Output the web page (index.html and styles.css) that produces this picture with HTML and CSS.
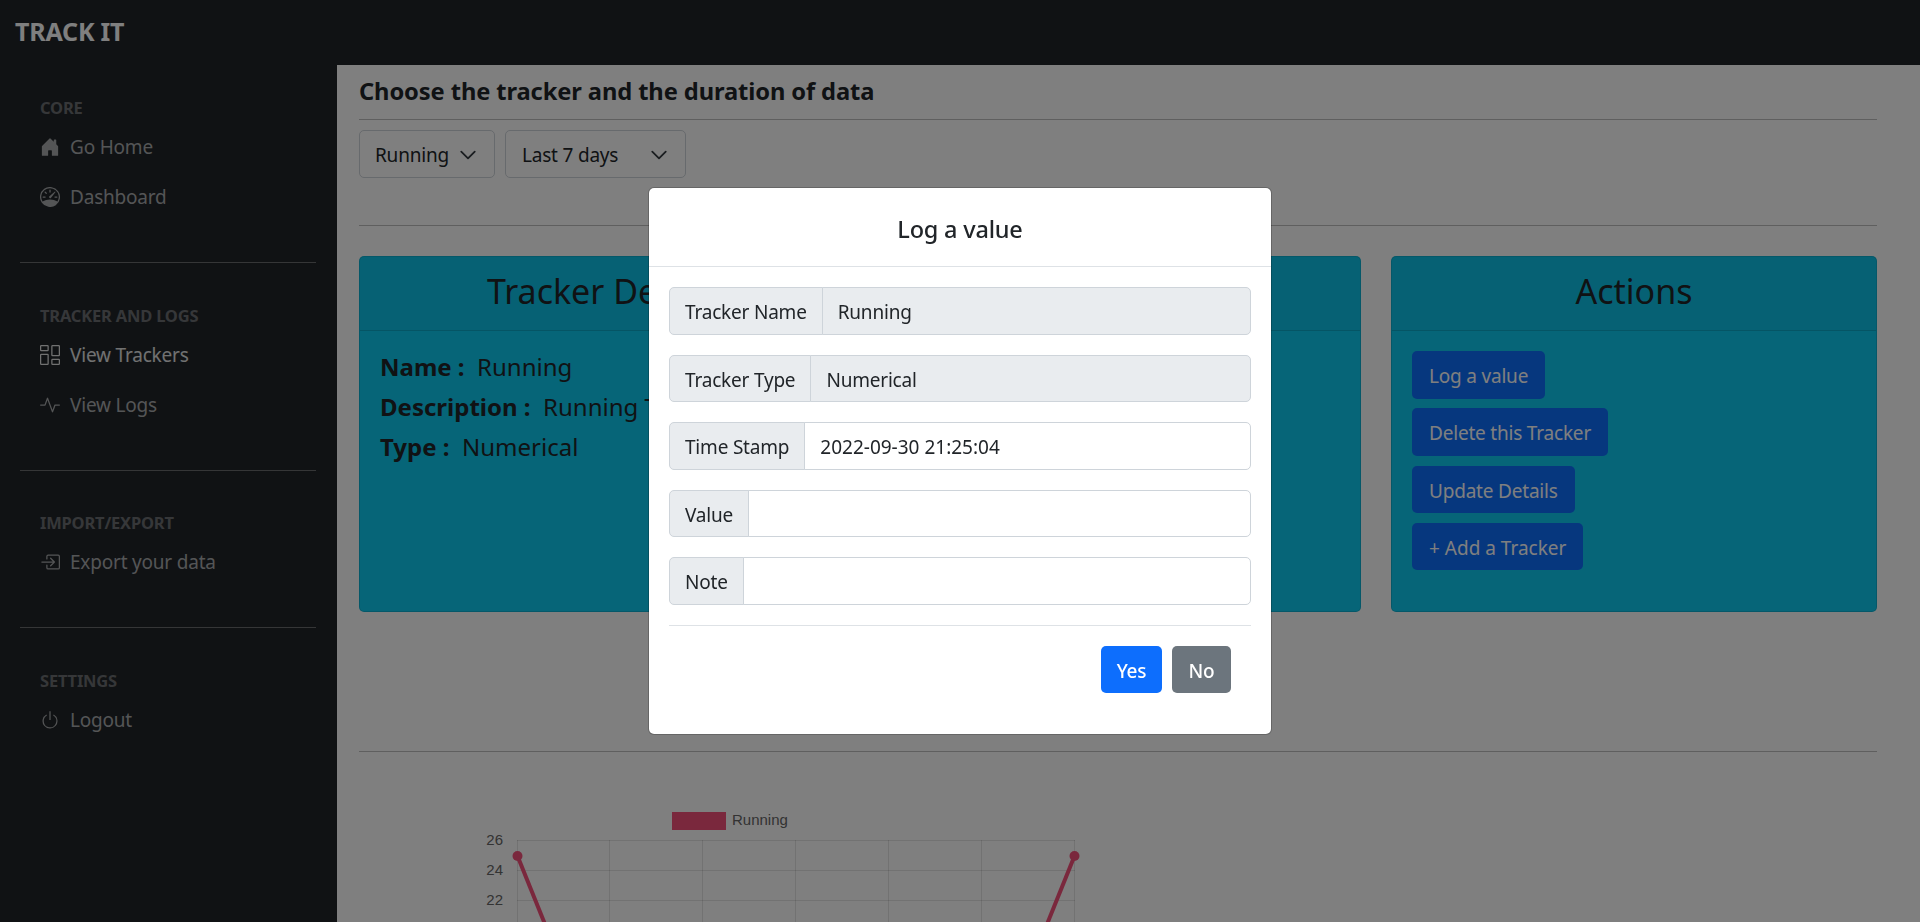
FILE: index.html
```html
<!DOCTYPE html>
<html lang="en">
<head>
    <meta charset="UTF-8">
    <meta name="viewport" content="width=device-width, initial-scale=1.0">
    <title>Track It</title>
    <link rel="stylesheet" href="styles.css">
</head>
<body>
    <header class="topbar">TRACK IT</header>

    <div class="layout">
        <nav class="sidebar">
            <div class="side-heading">CORE</div>
            <a class="side-link">
                <svg class="side-icon" viewBox="0 0 16 16"><path d="M6.5 14.5v-3.505c0-.245.25-.495.5-.495h2c.25 0 .5.25.5.5v3.5a.5.5 0 0 0 .5.5h4a.5.5 0 0 0 .5-.5v-7a.5.5 0 0 0-.146-.354L13 5.793V2.5a.5.5 0 0 0-.5-.5h-1a.5.5 0 0 0-.5.5v1.293L8.354 1.146a.5.5 0 0 0-.708 0l-6 6A.5.5 0 0 0 1.5 7.5v7a.5.5 0 0 0 .5.5h4a.5.5 0 0 0 .5-.5z"/></svg>
                Go Home
            </a>
            <a class="side-link">
                <svg class="side-icon" viewBox="0 0 16 16"><path d="M8 2a.5.5 0 0 1 .5.5V4a.5.5 0 0 1-1 0V2.5A.5.5 0 0 1 8 2zM3.732 3.732a.5.5 0 0 1 .707 0l.915.914a.5.5 0 1 1-.708.708l-.914-.915a.5.5 0 0 1 0-.707zM2 8a.5.5 0 0 1 .5-.5h1.586a.5.5 0 0 1 0 1H2.5A.5.5 0 0 1 2 8zm9.5 0a.5.5 0 0 1 .5-.5h1.5a.5.5 0 0 1 0 1H12a.5.5 0 0 1-.5-.5zm.754-4.246a.389.389 0 0 0-.527-.02L7.547 7.31A.91.91 0 1 0 8.85 8.569l3.434-4.297a.389.389 0 0 0-.029-.518z"/><path fill-rule="evenodd" d="M6.664 15.889A8 8 0 1 1 9.336.11a8 8 0 0 1-2.672 15.78zm-4.665-4.283A11.945 11.945 0 0 1 8 10c2.186 0 4.236.585 6.001 1.606a7 7 0 1 0-12.002 0z"/></svg>
                Dashboard
            </a>
            <hr class="side-rule">

            <div class="side-heading">TRACKER AND LOGS</div>
            <a class="side-link active">
                <svg class="side-icon" viewBox="0 0 16 16"><path d="M6 1v3H1V1h5zM1 0a1 1 0 0 0-1 1v3a1 1 0 0 0 1 1h5a1 1 0 0 0 1-1V1a1 1 0 0 0-1-1H1zm14 12v3h-5v-3h5zm-5-1a1 1 0 0 0-1 1v3a1 1 0 0 0 1 1h5a1 1 0 0 0 1-1v-3a1 1 0 0 0-1-1h-5zM6 8v7H1V8h5zM1 7a1 1 0 0 0-1 1v7a1 1 0 0 0 1 1h5a1 1 0 0 0 1-1V8a1 1 0 0 0-1-1H1zm14-6v7h-5V1h5zm-5-1a1 1 0 0 0-1 1v7a1 1 0 0 0 1 1h5a1 1 0 0 0 1-1V1a1 1 0 0 0-1-1h-5z"/></svg>
                View Trackers
            </a>
            <a class="side-link">
                <svg class="side-icon" viewBox="0 0 16 16"><path fill-rule="evenodd" d="M6 2a.5.5 0 0 1 .47.33L10 12.036l1.53-4.208A.5.5 0 0 1 12 7.5h3.5a.5.5 0 0 1 0 1h-3.15l-1.88 5.17a.5.5 0 0 1-.94 0L6 3.964 4.47 8.171A.5.5 0 0 1 4 8.5H.5a.5.5 0 0 1 0-1h3.15l1.88-5.17A.5.5 0 0 1 6 2z"/></svg>
                View Logs
            </a>
            <hr class="side-rule">

            <div class="side-heading">IMPORT/EXPORT</div>
            <a class="side-link">
                <svg class="side-icon" viewBox="0 0 16 16"><path fill-rule="evenodd" d="M6 3.5a.5.5 0 0 1 .5-.5h8a.5.5 0 0 1 .5.5v9a.5.5 0 0 1-.5.5h-8a.5.5 0 0 1-.5-.5v-2a.5.5 0 0 0-1 0v2A1.5 1.5 0 0 0 6.5 14h8a1.5 1.5 0 0 0 1.5-1.5v-9A1.5 1.5 0 0 0 14.5 2h-8A1.5 1.5 0 0 0 5 3.5v2a.5.5 0 0 0 1 0v-2z"/><path fill-rule="evenodd" d="M11.854 8.354a.5.5 0 0 0 0-.708l-3-3a.5.5 0 1 0-.708.708L10.293 7.5H1.5a.5.5 0 0 0 0 1h8.793l-2.147 2.146a.5.5 0 0 0 .708.708l3-3z"/></svg>
                Export your data
            </a>
            <hr class="side-rule">

            <div class="side-heading">SETTINGS</div>
            <a class="side-link">
                <svg class="side-icon" viewBox="0 0 16 16"><path d="M7.5 1v7h1V1h-1z"/><path d="M3 8.812a4.999 4.999 0 0 1 2.578-4.375l-.485-.874A6 6 0 1 0 11 3.616l-.501.865A5 5 0 1 1 3 8.812z"/></svg>
                Logout
            </a>
        </nav>

        <main class="content">
            <h4 class="page-title">Choose the tracker and the duration of data</h4>
            <hr class="rule first-rule">

            <div class="filters">
                <div class="select tracker-select">
                    Running
                    <svg class="chevron" viewBox="0 0 16 16"><path d="M2 5l6 6 6-6"/></svg>
                </div>
                <div class="select range-select">
                    Last 7 days
                    <svg class="chevron" viewBox="0 0 16 16"><path d="M2 5l6 6 6-6"/></svg>
                </div>
            </div>
            <hr class="rule filter-rule">

            <div class="cards">
                <section class="card details-card">
                    <div class="card-header details-header"><h3>Tracker Details</h3></div>
                    <div class="card-body">
                        <h5><b>Name :</b>&nbsp; Running</h5>
                        <h5><b>Description :</b>&nbsp; Running Tracker</h5>
                        <h5><b>Type :</b>&nbsp; Numerical</h5>
                    </div>
                </section>
                <section class="card actions-card">
                    <div class="card-header"><h3>Actions</h3></div>
                    <div class="card-body action-list">
                        <a class="btn btn-primary">Log a value</a>
                        <a class="btn btn-primary">Delete this Tracker</a>
                        <a class="btn btn-primary">Update Details</a>
                        <a class="btn btn-primary add-btn">+ Add a Tracker</a>
                    </div>
                </section>
            </div>
            <hr class="rule chart-rule">

            <svg class="chart" width="760" height="171" viewBox="0 0 760 171">
                <rect class="legend-box" x="313.500" y="60.500" width="53" height="17"/>
                <text class="chart-text" x="373" y="73">Running</text>

                <g class="grid">
                    <path d="M158.500 88v83M250.500 88v83M343.500 88v83M436.500 88v83M529.500 88v83M622.500 88v83M715.500 88v83"/>
                    <path d="M158 88.500h558M158 118.500h558M158 148.500h558"/>
                </g>

                <text class="chart-text axis" x="144" y="93">26</text>
                <text class="chart-text axis" x="144" y="123">24</text>
                <text class="chart-text axis" x="144" y="153">22</text>

                <polyline class="line" points="158.500,104 198,202"/>
                <polyline class="line" points="676,202 715.500,104"/>
                <circle class="dot" cx="158.500" cy="104" r="5"/>
                <circle class="dot" cx="715.500" cy="104" r="5"/>
            </svg>
        </main>
    </div>

    <div class="backdrop"></div>

    <div class="modal">
        <div class="modal-box">
            <div class="modal-header">Log a value</div>
            <div class="modal-body">
                <div class="input-group">
                    <span class="input-label">Tracker Name</span>
                    <div class="input-field readonly">Running</div>
                </div>
                <div class="input-group">
                    <span class="input-label">Tracker Type</span>
                    <div class="input-field readonly">Numerical</div>
                </div>
                <div class="input-group">
                    <span class="input-label">Time Stamp</span>
                    <div class="input-field stamp">2022-09-30 21:25:04</div>
                </div>
                <div class="input-group">
                    <span class="input-label">Value</span>
                    <div class="input-field"></div>
                </div>
                <div class="input-group">
                    <span class="input-label">Note</span>
                    <div class="input-field"></div>
                </div>
                <hr class="modal-rule">
                <div class="modal-actions">
                    <button class="btn btn-primary yes-btn">Yes</button>
                    <button class="btn btn-secondary no-btn">No</button>
                </div>
            </div>
        </div>
    </div>
</body>
</html>
```

FILE: styles.css
```css
* {
    box-sizing: border-box;
}
html, body {
    height: 100%;
}
body {
    margin: 0;
    overflow: hidden;
    font-family: "Noto Sans", sans-serif;
    font-size: 19px;
    line-height: 30px;
    letter-spacing: -.2px;
    color: #212529;
    background-color: #fff;
}
.topbar {
    height: 65px;
    padding: 15px 15px 0;
    background-color: #212529;
    color: #fff;
    font-size: 25px;
    font-weight: 700;
    line-height: 32px;
}
.layout {
    display: flex;
    height: calc(100% - 65px);
}

/* sidebar */
.sidebar {
    width: 337px;
    flex-shrink: 0;
    padding: 32px 21px 0 20px;
    background-color: #212529;
}
.side-heading {
    height: 22px;
    margin-bottom: 3px;
    padding-left: 20px;
    font-size: 16.500px;
    font-weight: 700;
    line-height: 22px;
    color: #6c6f72;
}
.side-link {
    display: flex;
    align-items: center;
    gap: 10px;
    height: 50px;
    padding-left: 20px;
    color: #a9abad;
}
.side-link.active {
    color: #e2e3e3;
}
.side-icon {
    width: 20px;
    height: 20px;
    fill: currentColor;
}
.side-rule {
    height: 1px;
    margin: 40px 0 41.600px;
    border: 0;
    background-color: #6a6c6f;
}

/* main column */
.content {
    flex: 1;
    min-width: 0;
    padding: 11px 43px 0 22px;
}
.page-title {
    margin: 0;
    font-size: 23.700px;
    font-weight: 700;
    line-height: 30px;
    letter-spacing: -.1px;
}
.rule {
    height: 1px;
    margin: 0;
    border: 0;
    background-color: #bfbfbf;
}
.first-rule {
    margin-top: 13px;
}
.filters {
    display: flex;
    gap: 10px;
    margin-top: 10px;
}
.select {
    display: flex;
    align-items: center;
    justify-content: space-between;
    height: 48px;
    padding: 2px 17px 0 15px;
    border: 1px solid #ced4da;
    border-radius: 5px;
}
.tracker-select {
    width: 136px;
}
.range-select {
    width: 181px;
    padding-left: 16px;
}
.chevron {
    width: 18px;
    height: 18px;
    fill: none;
    stroke: #343a40;
    stroke-width: 1.600;
    stroke-linecap: round;
    stroke-linejoin: round;
}
.filter-rule {
    margin-top: 47px;
}
.cards {
    display: flex;
    gap: 30px;
    margin-top: 30px;
}
.card {
    height: 356px;
    border: 1px solid rgba(0, 0, 0, .125);
    border-radius: 5px;
    background-color: #0dcaf0;
}
.details-card {
    flex: 1;
}
.actions-card {
    width: 486px;
}
.card-header {
    height: 74px;
    padding-top: 13px;
    border-bottom: 1px solid rgba(0, 0, 0, .125);
    background-color: rgba(0, 0, 0, .03);
    text-align: center;
}
.details-header {
    padding-left: 127px;
    text-align: left;
}
.card-header h3 {
    margin: 0;
    font-size: 34px;
    font-weight: 400;
    line-height: 42px;
    letter-spacing: 0;
}
.card-body {
    padding: 21px 20px 20px;
}
.card-body h5 {
    margin: 0 0 10px;
    font-size: 24px;
    font-weight: 400;
    line-height: 30px;
    letter-spacing: 0;
}
.card-body h5 b {
    font-weight: 700;
}
.action-list {
    display: flex;
    flex-direction: column;
    align-items: flex-start;
    gap: 9.800px;
    padding-top: 20px;
}
.btn {
    display: inline-block;
    height: 47.500px;
    padding: 2px 16px 0;
    border: 1px solid transparent;
    border-radius: 5px;
    font: inherit;
    line-height: 45px;
    letter-spacing: inherit;
    color: #fff;
}
.add-btn {
    letter-spacing: 0;
}
.btn-primary {
    background-color: #0d6efd;
}
.btn-secondary {
    background-color: #6c757d;
}
.chart-rule {
    margin-top: 139px;
}
.chart {
    display: block;
    overflow: hidden;
}
.legend-box {
    fill: #f5507a;
    stroke: #f5507a;
}
.chart-text {
    font-family: "Liberation Sans", sans-serif;
    font-size: 15px;
    letter-spacing: 0;
    fill: #666;
}
.axis {
    text-anchor: end;
}
.grid path {
    fill: none;
    stroke: rgba(0, 0, 0, .1);
}
.line {
    fill: none;
    stroke: #f5507a;
    stroke-width: 4;
}
.dot {
    fill: #f5507a;
}

/* log a value dialog */
.backdrop {
    position: fixed;
    inset: 0;
    background-color: rgba(0, 0, 0, .5);
}
.modal {
    position: fixed;
    inset: 0;
    display: flex;
    justify-content: center;
    padding-top: 187px;
}
.modal-box {
    width: 624px;
    height: 548px;
    border: 1px solid rgba(0, 0, 0, .2);
    border-radius: 6px;
    background-color: #fff;
    background-clip: padding-box;
}
.modal-header {
    height: 79px;
    padding-top: 26px;
    border-bottom: 1px solid #dee2e6;
    font-size: 23.500px;
    font-weight: 500;
    line-height: 30px;
    text-align: center;
}
.modal-body {
    padding: 20px;
}
.input-group {
    display: flex;
    height: 47.500px;
    margin-bottom: 20px;
}
.input-label {
    padding: 2px 15px 0;
    border: 1px solid #ced4da;
    border-radius: 5px 0 0 5px;
    background-color: #e9ecef;
    line-height: 45px;
    white-space: nowrap;
}
.input-field {
    flex: 1;
    margin-left: -1px;
    padding: 2px 15px 0;
    border: 1px solid #ced4da;
    border-radius: 0 5px 5px 0;
    line-height: 45px;
}
.input-field.readonly {
    background-color: #e9ecef;
}
.input-field.stamp {
    letter-spacing: 0;
}
.modal-rule {
    height: 1px;
    margin: 0;
    border: 0;
    background-color: #dee2e6;
}
.modal-actions {
    display: flex;
    justify-content: flex-end;
    gap: 10px;
    margin-top: 20px;
    padding-right: 20px;
}
.yes-btn {
    width: 61px;
    padding: 2px 0 0;
    font-weight: 500;
}
.no-btn {
    width: 59px;
    padding: 2px 0 0;
    font-weight: 500;
}
```
